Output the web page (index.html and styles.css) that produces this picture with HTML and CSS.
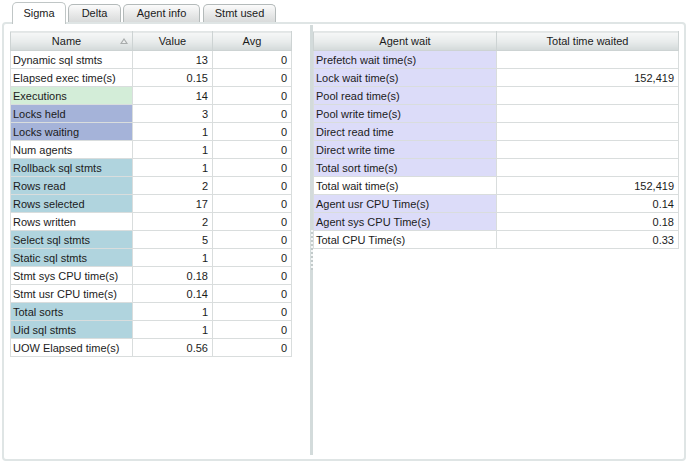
FILE: index.html
```html
<!DOCTYPE html>
<html>
<head>
<meta charset="utf-8">
<link rel="stylesheet" href="styles.css">
</head>
<body>
<div class="tabs">
  <div class="tab active t1">Sigma</div>
  <div class="tab t2">Delta</div>
  <div class="tab t3">Agent info</div>
  <div class="tab t4">Stmt used</div>
</div>
<div class="panel">
  <div class="left">
    <table class="grid lgrid">
      <colgroup><col class="c1"><col class="c2"><col class="c3"></colgroup>
      <thead><tr><th class="sorted">Name<span class="arrow"></span></th><th>Value</th><th>Avg</th></tr></thead>
      <tbody>
        <tr><td>Dynamic sql stmts</td><td class="n">13</td><td class="n">0</td></tr>
        <tr><td>Elapsed exec time(s)</td><td class="n">0.15</td><td class="n">0</td></tr>
        <tr><td class="green">Executions</td><td class="n">14</td><td class="n">0</td></tr>
        <tr><td class="slate">Locks held</td><td class="n">3</td><td class="n">0</td></tr>
        <tr><td class="slate">Locks waiting</td><td class="n">1</td><td class="n">0</td></tr>
        <tr><td>Num agents</td><td class="n">1</td><td class="n">0</td></tr>
        <tr><td class="teal">Rollback sql stmts</td><td class="n">1</td><td class="n">0</td></tr>
        <tr><td class="teal">Rows read</td><td class="n">2</td><td class="n">0</td></tr>
        <tr><td class="teal">Rows selected</td><td class="n">17</td><td class="n">0</td></tr>
        <tr><td>Rows written</td><td class="n">2</td><td class="n">0</td></tr>
        <tr><td class="teal">Select sql stmts</td><td class="n">5</td><td class="n">0</td></tr>
        <tr><td class="teal">Static sql stmts</td><td class="n">1</td><td class="n">0</td></tr>
        <tr><td>Stmt sys CPU time(s)</td><td class="n">0.18</td><td class="n">0</td></tr>
        <tr><td>Stmt usr CPU time(s)</td><td class="n">0.14</td><td class="n">0</td></tr>
        <tr><td class="teal">Total sorts</td><td class="n">1</td><td class="n">0</td></tr>
        <tr><td class="teal">Uid sql stmts</td><td class="n">1</td><td class="n">0</td></tr>
        <tr><td>UOW Elapsed time(s)</td><td class="n">0.56</td><td class="n">0</td></tr>
      </tbody>
    </table>
  </div>
  <div class="splitter"><div class="grip"></div></div>
  <div class="right">
    <table class="grid rgrid">
      <colgroup><col class="r1"><col class="r2"></colgroup>
      <thead><tr><th>Agent wait</th><th>Total time waited</th></tr></thead>
      <tbody>
        <tr><td class="lav">Prefetch wait time(s)</td><td class="n"></td></tr>
        <tr><td class="lav">Lock wait time(s)</td><td class="n">152,419</td></tr>
        <tr><td class="lav">Pool read time(s)</td><td class="n"></td></tr>
        <tr><td class="lav">Pool write time(s)</td><td class="n"></td></tr>
        <tr><td class="lav">Direct read time</td><td class="n"></td></tr>
        <tr><td class="lav">Direct write time</td><td class="n"></td></tr>
        <tr><td class="lav">Total sort time(s)</td><td class="n"></td></tr>
        <tr><td>Total wait time(s)</td><td class="n">152,419</td></tr>
        <tr><td class="lav">Agent usr CPU Time(s)</td><td class="n">0.14</td></tr>
        <tr><td class="lav">Agent sys CPU Time(s)</td><td class="n">0.18</td></tr>
        <tr><td>Total CPU Time(s)</td><td class="n">0.33</td></tr>
      </tbody>
    </table>
  </div>
</div>
</body>
</html>
```
FILE: styles.css
```css
* { box-sizing: border-box; }
html, body { margin: 0; padding: 0; background: #ffffff; }
body {
  font-family: "Liberation Sans", Arial, sans-serif;
  font-size: 11px;
  color: #1b1b1b;
  width: 688px;
  height: 463px;
  overflow: hidden;
}
.tabs {
  display: flex;
  align-items: flex-end;
  height: 22px;
  padding-left: 12px;
  gap: 2px;
  position: relative;
  z-index: 2;
}
.tab {
  height: 18px;
  border: 1px solid #b4baba;
  border-bottom: none;
  border-radius: 5px 5px 0 0;
  background: linear-gradient(#fbfbfb, #e6e7e7 60%, #d9dbdb);
  text-align: center;
  line-height: 17px;
  color: #1b1b1b;
}
.tab.active {
  height: 22px;
  margin-bottom: -2px;
  background: #ffffff;
  line-height: 21px;
  border-color: #c0c6c6;
}
.t1 { width: 54px; }
.t2 { width: 53px; }
.t3 { width: 77px; margin-left: 0; }
.t4 { width: 73px; margin-left: 1px; }
.panel {
  position: relative;
  z-index: 1;
  margin-left: 2px;
  width: 684px;
  height: 439px;
  border: 2px solid #dfe5e5;
  border-radius: 4px;
  display: flex;
  background: #ffffff;
}
.left {
  width: 306px;
  padding: 7px 0 0 6px;
}
.splitter {
  width: 3px;
  margin: 1px 0 4px;
  background: #d3dbdb;
  display: flex;
  flex-direction: column;
}
.grip {
  margin-top: 205px;
  height: 40px;
  width: 2px;
  margin-left: 1px;
  background: repeating-linear-gradient(#f4f6f6 0 2px, #c2caca 2px 4px);
}
.right {
  width: 365px;
  padding-top: 7px;
}
.grid {
  border-collapse: collapse;
  table-layout: fixed;
}
.lgrid { width: 281px; }
.rgrid { width: 365px; }
.c1 { width: 122px; }
.c2 { width: 80px; }
.c3 { width: 79px; }
.r1 { width: 183px; }
.r2 { width: 182px; }
.grid th {
  height: 19px;
  padding: 0;
  font-weight: normal;
  text-align: center;
  border: 1px solid #cdd3d3;
  border-top-color: #e2e6e6;
  background: linear-gradient(#f6f7f7, #e9ecec 50%, #d3d9d9);
  position: relative;
  color: #1b1b1b;
}
.grid th.sorted { padding-right: 10px; }
.arrow {
  position: absolute;
  right: 4px;
  top: 6px;
  width: 0;
  height: 0;
  border-left: 4px solid transparent;
  border-right: 4px solid transparent;
  border-bottom: 6px solid #a8acac;
}
.arrow::after {
  content: "";
  position: absolute;
  left: -2px;
  top: 2px;
  border-left: 2px solid transparent;
  border-right: 2px solid transparent;
  border-bottom: 3px solid #eef0f0;
}
.grid td {
  height: 18px;
  padding: 0 3px 0 2px;
  border: 1px solid #d9dddd;
  white-space: nowrap;
  overflow: hidden;
  line-height: 16px;
}
.grid td.n { text-align: right; padding-right: 4px; }
.green { background: #d3edd8; }
.slate { background: #a5b3d9; }
.teal { background: #b0d4de; }
.lav { background: #dcdcf9; }
```
